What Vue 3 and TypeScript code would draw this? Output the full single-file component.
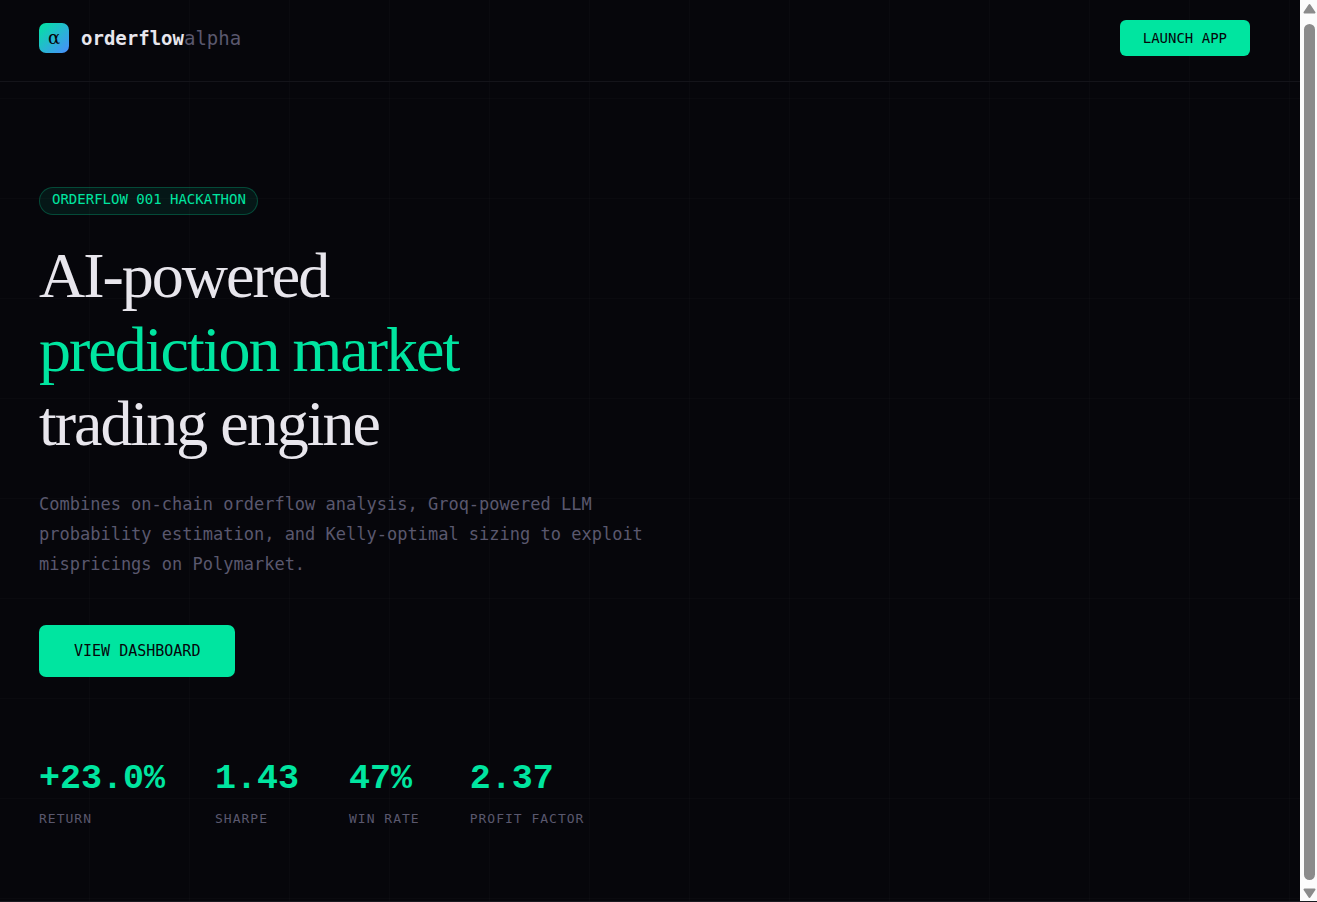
<script setup lang="ts">
interface Stat {
  value: string
  label: string
}

const stats: Stat[] = [
  { value: '+23.0%', label: 'Return' },
  { value: '1.43', label: 'Sharpe' },
  { value: '47%', label: 'Win rate' },
  { value: '2.37', label: 'Profit factor' },
]
</script>

<template>
  <div class="frame">
    <div class="page">
      <header class="header">
        <a class="brand" href="#">
          <span class="mark">α</span>
          <span class="name">orderflow<span class="suffix">alpha</span></span>
        </a>
        <button class="button launch" type="button">Launch app</button>
      </header>

      <main class="hero">
        <span class="badge">Orderflow 001 Hackathon</span>
        <h1 class="title">
          AI-powered<br />
          <span class="accent">prediction market</span><br />
          trading engine
        </h1>
        <p class="lead">
          Combines on-chain orderflow analysis, Groq-powered LLM probability
          estimation, and Kelly-optimal sizing to exploit mispricings on Polymarket.
        </p>
        <button class="button view" type="button">View dashboard</button>

        <dl class="stats">
          <div v-for="stat in stats" :key="stat.label" class="stat">
            <dt class="label">{{ stat.label }}</dt>
            <dd class="value">{{ stat.value }}</dd>
          </div>
        </dl>
      </main>
    </div>

    <div class="scrollbar" aria-hidden="true">
      <svg class="arrow" viewBox="0 0 16 12"><path d="M8.5 2 13.5 9.5H3.5Z" /></svg>
      <div class="thumb"></div>
      <svg class="arrow" viewBox="0 0 16 12"><path d="M3.5 2.5H13.5L8.5 10Z" /></svg>
    </div>
  </div>
</template>

<style>
body {
  margin: 0;
  background: #06060b;
}
</style>

<style scoped>
.frame {
  --green: #00e5a0;
  --ink: #e8e6ed;
  --muted: #5a586e;
  --mono: "DejaVu Sans Mono", monospace;
  display: grid;
  grid-template-columns: 1fr 17px;
  box-sizing: border-box;
  height: 100vh;
  overflow: hidden;
  border-bottom: 1px solid #1a1a20;
  color: var(--ink);
  font-family: var(--mono);
}

.page {
  background-color: #06060b;
  background-image:
    linear-gradient(90deg, rgba(255, 255, 255, 0.016) 1px, transparent 1px),
    linear-gradient(rgba(255, 255, 255, 0.016) 1px, transparent 1px);
  background-size: 100px 100px;
  background-position: 89px 98px;
}

.header {
  display: flex;
  align-items: center;
  justify-content: space-between;
  padding: 20px 50px 25px 39px;
  border-bottom: 1px solid #14141a;
}

.brand {
  display: flex;
  align-items: center;
  gap: 12px;
  color: inherit;
  text-decoration: none;
}

.mark {
  width: 30px;
  height: 30px;
  border-radius: 7px;
  background: linear-gradient(135deg, #00e5a0, #4a8cff);
  color: #06060b;
  font: 18px/30px "DejaVu Serif", serif;
  text-align: center;
}

.name {
  font-size: 19px;
  font-weight: 700;
  line-height: 30px;
}

.suffix {
  color: var(--muted);
  font-weight: 400;
}

.button {
  border: 0;
  background: var(--green);
  color: #06060b;
  font-family: var(--mono);
  text-transform: uppercase;
  cursor: pointer;
}

.launch {
  padding: 0 23px;
  border-radius: 6px;
  font-size: 14px;
  line-height: 36px;
}

.view {
  margin-top: 46px;
  padding: 0 35px;
  border-radius: 7px;
  font-size: 15px;
  line-height: 52px;
}

.hero {
  display: flex;
  flex-direction: column;
  align-items: flex-start;
  padding: 105px 39px 0;
}

.badge {
  padding: 0 11px 4px 12px;
  border: 1px solid rgba(0, 229, 160, 0.25);
  border-radius: 14px;
  background: rgba(0, 229, 160, 0.08);
  color: var(--green);
  font-size: 14px;
  line-height: 22px;
  text-transform: uppercase;
}

.title {
  margin: 24px 0 0;
  font: 400 64px/74px "Liberation Serif", serif;
  letter-spacing: -2px;
}

.accent {
  color: var(--green);
}

.lead {
  max-width: 630px;
  margin: 28px 0 0;
  color: var(--muted);
  font-size: 17px;
  line-height: 30px;
}

.stats {
  display: flex;
  gap: 50px;
  margin: 79px 0 0;
}

.stat {
  display: flex;
  flex-direction: column-reverse;
  gap: 8px;
}

.value {
  margin: 0;
  color: var(--green);
  font-family: "Liberation Mono", monospace;
  font-size: 35px;
  font-weight: 700;
  line-height: 46px;
}

.label {
  color: var(--muted);
  font-size: 13px;
  line-height: 18px;
  letter-spacing: 1px;
  text-transform: uppercase;
}

.scrollbar {
  display: flex;
  flex-direction: column;
  background: #fcfcfc;
}

.arrow {
  display: block;
  height: 12px;
  margin: 3px 0 0 1px;
  fill: #8b8b8b;
  stroke: #8b8b8b;
  stroke-width: 2;
  stroke-linejoin: round;
}

.thumb {
  flex: 1;
  margin: 9px 2px 4px 4px;
  border-radius: 6px;
  background: #8b8b8b;
}

.thumb + .arrow {
  margin-bottom: 2px;
}
</style>
